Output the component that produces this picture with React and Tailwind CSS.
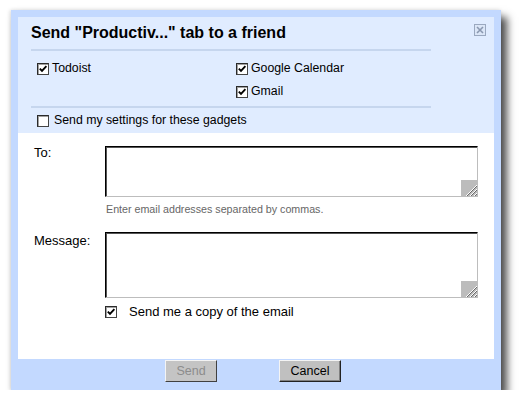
import React from "react";

function Box({ checked }) {
  return (
    <span className="relative inline-block w-[12px] h-[12px] shrink-0 border border-t-[#2a2a2a] border-l-[#2a2a2a] border-r-[#444] border-b-[#444] bg-white shadow-[inset_1px_1px_0_#a0a0a0]">
      {checked && (
        <svg viewBox="0 0 10 10" className="absolute left-0 top-0 w-[10px] h-[10px]">
          <path d="M1.8 4.6 L4 6.9 L8.4 2.2" stroke="#000" strokeWidth="1.9" fill="none" />
        </svg>
      )}
    </span>
  );
}

function Handle() {
  return (
    <svg viewBox="0 0 16 16" className="absolute right-0 bottom-0 w-[16px] h-[16px]">
      <rect x="0" y="0" width="16" height="16" fill="#bcbcbc" />
      <path d="M16 5 L5 16" stroke="#fff" strokeWidth="1" />
      <path d="M16 6 L6 16" stroke="#6a6a6a" strokeWidth="1" />
      <path d="M16 9 L9 16" stroke="#fff" strokeWidth="1" />
      <path d="M16 10 L10 16" stroke="#6a6a6a" strokeWidth="1" />
      <path d="M16 13 L13 16" stroke="#fff" strokeWidth="1" />
      <path d="M16 14 L14 16" stroke="#6a6a6a" strokeWidth="1" />
    </svg>
  );
}

function Area({ h }) {
  return (
    <div
      className={`relative w-[373px] ${h} bg-white border border-t-[#000] border-l-[#000] border-r-[#bdbdbd] border-b-[#bdbdbd] shadow-[inset_1px_1px_0_#555]`}
    >
      <Handle />
    </div>
  );
}

export default function App() {
  return (
    <div className="pl-[11px] pt-[10px] font-['Liberation_Sans',Arial,sans-serif] text-black">
      <div className="w-[490px] bg-[#c3d9ff] pt-[7px] px-[7px] shadow-[6px_7px_8px_rgba(0,0,0,0.7),-1px_0_4px_rgba(0,0,0,0.15)]">
        {/* top panel */}
        <div className="bg-[#e0ecff] px-[13px] pt-[6px]">
          <div className="flex">
            <div className="flex-1 text-[16px] font-bold leading-[20px]">
              Send "Productiv..." tab to a friend
            </div>
            <svg viewBox="0 0 12 12" className="w-[12px] h-[12px] mt-[1px] -mr-[5px]">
              <rect x="0.5" y="0.5" width="11" height="11" fill="#dbe6f7" stroke="#9aa8bf" />
              <path d="M3 3 L9 9 M9 3 L3 9" stroke="#8a98b0" strokeWidth="1.6" />
            </svg>
          </div>
          <div className="w-[400px] h-[2px] mt-[6px] bg-[#c6d6ee]" />
          <div className="pl-[6px] pt-[6px] grid grid-cols-[199px_auto] text-[12.3px]">
            <div className="h-[23px] flex items-center gap-[3px]">
              <Box checked />
              <span>Todoist</span>
            </div>
            <div className="h-[23px] flex items-center gap-[3px]">
              <Box checked />
              <span>Google Calendar</span>
            </div>
            <div className="h-[23px]" />
            <div className="h-[23px] flex items-center gap-[3px]">
              <Box checked />
              <span>Gmail</span>
            </div>
          </div>
          <div className="w-[400px] h-[2px] mt-[3px] bg-[#c6d6ee]" />
          <div className="pl-[6px] h-[25px] flex items-center gap-[5px] text-[12.3px]">
            <Box />
            <span>Send my settings for these gadgets</span>
          </div>
        </div>

        {/* white form */}
        <div className="bg-white h-[226px] pl-[16px] pt-[13px] text-[13px]">
          <div className="flex">
            <div className="w-[71px] leading-[16px] -mt-[1px]">To:</div>
            <Area h="h-[51px]" />
          </div>
          <div className="ml-[72px] mt-[6px] text-[10.7px] leading-[13px] text-[#666]">
            Enter email addresses separated by commas.
          </div>
          <div className="flex mt-[16px]">
            <div className="w-[71px] leading-[16px] mt-[1px]">Message:</div>
            <Area h="h-[66px]" />
          </div>
          <div className="ml-[71px] mt-[6px] h-[16px] flex items-center gap-[12px]">
            <Box checked />
            <span>Send me a copy of the email</span>
          </div>
        </div>

        {/* footer */}
        <div className="h-[31px] pt-[1px] pl-[147px] flex items-start gap-[62px] text-[12.5px]">
          <div className="w-[52px] h-[22px] flex items-center justify-center bg-[#c4c4c4] text-[#8c8c8c] border border-t-[#f4f4f4] border-l-[#f4f4f4] border-r-[#404040] border-b-[#404040]">
            Send
          </div>
          <div className="w-[62px] h-[22px] flex items-center justify-center bg-[#c0c0c0] text-black border border-t-[#f4f4f4] border-l-[#f4f4f4] border-r-[#222] border-b-[#222] shadow-[inset_-1px_-1px_0_#808080]">
            Cancel
          </div>
        </div>
      </div>
    </div>
  );
}
